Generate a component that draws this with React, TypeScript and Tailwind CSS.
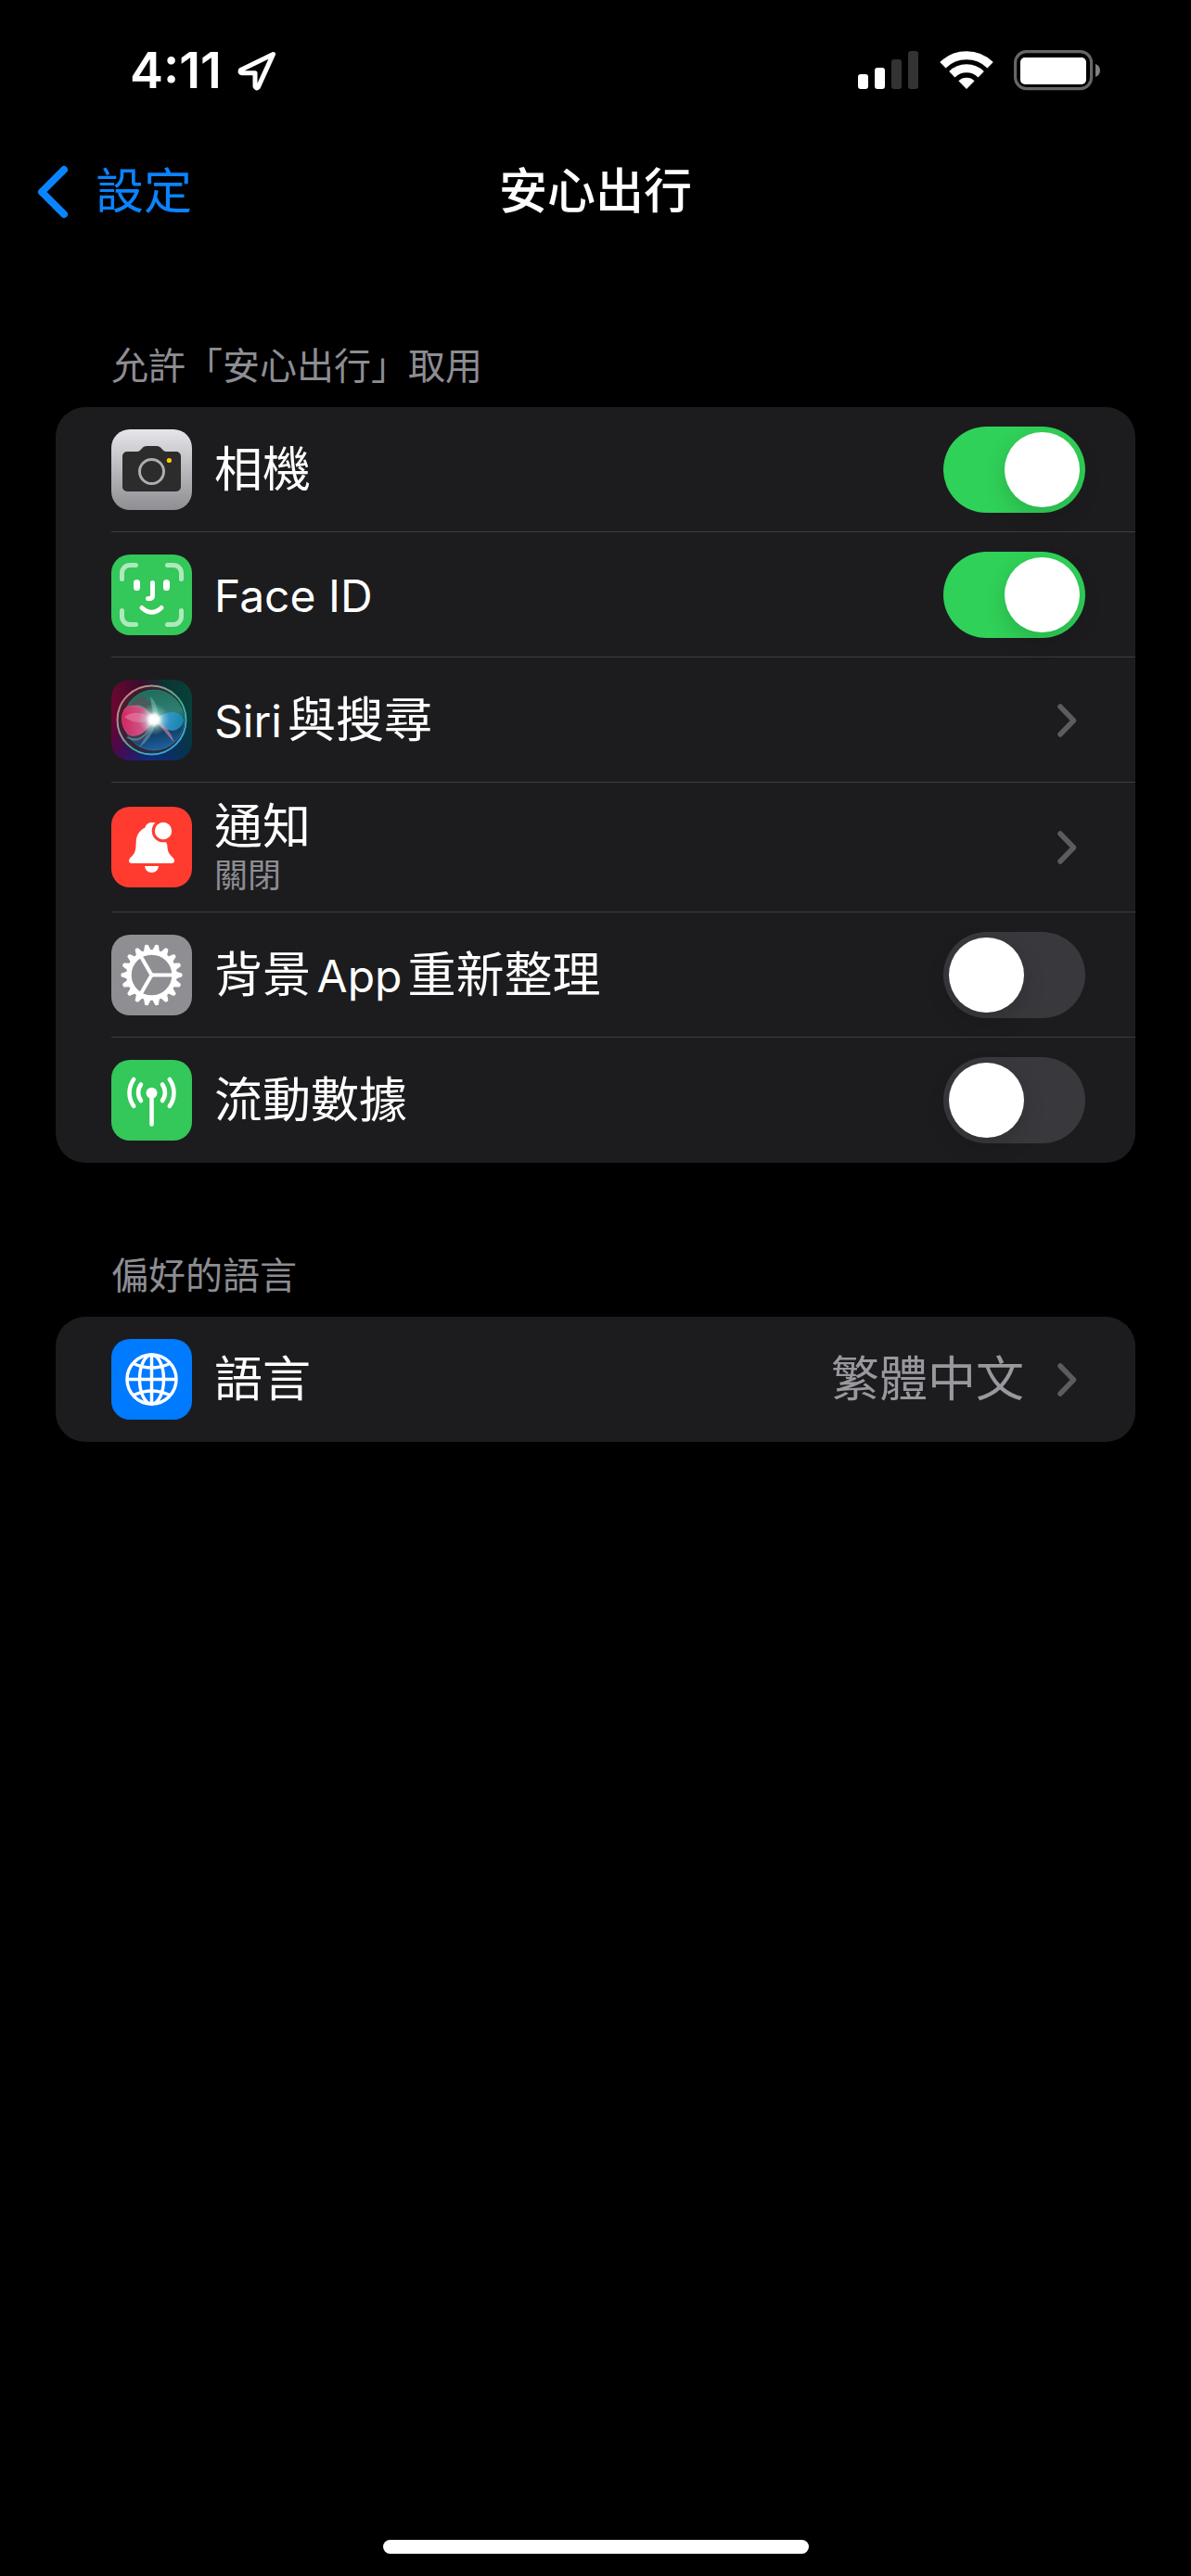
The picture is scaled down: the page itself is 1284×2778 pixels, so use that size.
import { useId, type ReactNode } from 'react'
import clsx from 'clsx'

/* ---------- status bar ---------- */

function LocationArrow() {
  return (
    <svg width="44" height="44" viewBox="0 0 44 44" fill="none" aria-hidden="true">
      <path
        d="M39.5 4.5 4.5 21.5q-1.6 2.6 1.2 3.2H20v14.6q1.4 3 3.4.6Z"
        stroke="#fff"
        strokeWidth="5"
        strokeLinejoin="round"
      />
    </svg>
  )
}

function CellularIcon() {
  return (
    <svg width="66" height="44" viewBox="0 0 66 44" aria-hidden="true">
      <rect x="0" y="26" width="11" height="16" rx="3" fill="#fff" />
      <rect x="18" y="19" width="11" height="23" rx="3" fill="#fff" />
      <rect x="36" y="10" width="11" height="32" rx="3" fill="#333" />
      <rect x="54" y="1" width="11" height="41" rx="3" fill="#333" />
    </svg>
  )
}

function WifiIcon() {
  return (
    <svg width="58" height="44" viewBox="0 0 58 44" aria-hidden="true">
      <g fill="none" stroke="#fff" strokeWidth="9">
        <path d="M3.4 16.2A36.6 36.6 0 0 1 54.6 16.2" />
        <path d="M13.3 26.2A22.4 22.4 0 0 1 44.7 26.2" />
      </g>
      <path d="M20.4 33.3a12.4 12.4 0 0 1 17.2 0L29 42Z" fill="#fff" />
    </svg>
  )
}

function BatteryIcon() {
  return (
    <svg width="95" height="44" viewBox="0 0 95 44" aria-hidden="true">
      <rect x="1.6" y="1.6" width="82" height="40" rx="12" fill="none" stroke="#666" strokeWidth="3.2" />
      <rect x="7" y="8" width="71" height="29" rx="5" fill="#fff" />
      <path d="M88 15q5 2 5 7t-5 7Z" fill="#808080" />
    </svg>
  )
}

/* ---------- row icons, all on an 87 unit tile ---------- */

function Tile({ className, children }: { className?: string; children: ReactNode }) {
  return (
    <span className={clsx('block size-[87px] shrink-0 overflow-hidden rounded-[20px]', className)}>
      <svg width="87" height="87" viewBox="0 0 87 87" fill="none" aria-hidden="true">
        {children}
      </svg>
    </span>
  )
}

function CameraIcon() {
  return (
    <Tile className="bg-linear-to-b from-[#e5e5ea] to-[#8e8e93]">
      <path
        d="M17 24h11q2 0 3.500-1.800L34 19.500Q35.500 18 38 18h11q2.500 0 4 1.500l2.500 2.700Q57 24 59 24h11a5 5 0 0 1 5 5v33a5 5 0 0 1-5 5H17a5 5 0 0 1-5-5V29a5 5 0 0 1 5-5Z"
        fill="#2c2c2c"
      />
      <circle cx="43.500" cy="45.500" r="13" stroke="#adadb2" strokeWidth="3" />
      <circle cx="62.400" cy="33.500" r="2.600" fill="#ffcc00" />
    </Tile>
  )
}

function FaceIdIcon() {
  return (
    <Tile className="bg-[#34c759]">
      <g strokeWidth="5" strokeLinecap="round">
        <path
          d="M11.500 26.500V20a8.500 8.500 0 0 1 8.500-8.500h6.500M60.500 11.500H67a8.500 8.500 0 0 1 8.500 8.500v6.500M75.500 60.500V67a8.500 8.500 0 0 1-8.500 8.500h-6.500M26.500 75.500H20a8.500 8.500 0 0 1-8.500-8.500v-6.500"
          stroke="#aee9bd"
        />
        <path d="M44.500 30.500v13.500q0 3.500-3.500 3.500h-1.500M33 57.500q10.500 9.500 21 0" stroke="#fff" />
        <path d="M27.500 30.500v5M59.500 30.500v5" stroke="#fff" strokeWidth="7" />
      </g>
    </Tile>
  )
}

function SiriIcon() {
  const id = useId()
  const ref = (name: string) => `url(#${id}${name})`

  return (
    <Tile>
      <defs>
        <linearGradient id={`${id}bg`} x1="0" y1="0" x2="1" y2="0">
          <stop offset="0" stopColor="#6c0730" />
          <stop offset="0.35" stopColor="#3a0c2c" />
          <stop offset="0.65" stopColor="#0b3433" />
          <stop offset="1" stopColor="#07403a" />
        </linearGradient>
        <linearGradient id={`${id}low`} x1="0" y1="0" x2="1" y2="0">
          <stop offset="0" stopColor="#4a0650" />
          <stop offset="0.45" stopColor="#122a80" />
          <stop offset="1" stopColor="#07304f" />
        </linearGradient>
        <linearGradient id={`${id}fade`} x1="0" y1="0" x2="0" y2="1">
          <stop offset="0.45" stopColor="#000" />
          <stop offset="1" stopColor="#fff" />
        </linearGradient>
        <mask id={`${id}mask`}>
          <rect width="87" height="87" fill={ref('fade')} />
        </mask>
        <linearGradient id={`${id}ring`} x1="0.1" y1="0.15" x2="0.85" y2="0.85">
          <stop offset="0" stopColor="#cf7f80" />
          <stop offset="0.35" stopColor="#8f9d93" />
          <stop offset="0.6" stopColor="#35b58a" />
          <stop offset="1" stopColor="#35a4e6" />
        </linearGradient>
        <linearGradient id={`${id}orb`} x1="0.3" y1="0" x2="0.5" y2="1">
          <stop offset="0" stopColor="#1f6b58" />
          <stop offset="0.45" stopColor="#2f7f74" />
          <stop offset="0.7" stopColor="#123c5c" />
          <stop offset="1" stopColor="#1d5fa3" />
        </linearGradient>
        <linearGradient id={`${id}pink`} x1="0" y1="0" x2="1" y2="0">
          <stop offset="0" stopColor="#e0225f" />
          <stop offset="0.7" stopColor="#dc5d93" />
          <stop offset="1" stopColor="#fff" />
        </linearGradient>
        <linearGradient id={`${id}blue`} x1="0" y1="0" x2="1" y2="0">
          <stop offset="0" stopColor="#fff" />
          <stop offset="0.35" stopColor="#3f9fe0" />
          <stop offset="1" stopColor="#1390b4" />
        </linearGradient>
        <radialGradient id={`${id}glow`}>
          <stop offset="0" stopColor="#fff" />
          <stop offset="0.3" stopColor="#fff" stopOpacity="0.95" />
          <stop offset="0.55" stopColor="#c9f3ea" stopOpacity="0.4" />
          <stop offset="1" stopColor="#9fe0d5" stopOpacity="0" />
        </radialGradient>
      </defs>
      <rect width="87" height="87" fill={ref('bg')} />
      <rect width="87" height="87" fill={ref('low')} mask={ref('mask')} />
      <circle cx="43.500" cy="43.500" r="37" fill="#3c2a35" fillOpacity="0.6" stroke={ref('ring')} strokeWidth="2" />
      <circle cx="46" cy="43.500" r="32.500" fill={ref('orb')} stroke="#2fa07c" strokeOpacity="0.5" />
      <path d="M13 45q2-22 21-27 10 5 12 25Q40 64 28 68 14 62 13 45Z" fill="#7a3a4c" fillOpacity="0.45" />
      <path d="M45 42Q32 20 16 34M45 44Q34 72 17 62" stroke="#5ccfc6" strokeOpacity="0.5" strokeWidth="2" />
      <path
        d="M47 43C39 31 24 24 15 31c-6 8-4 24 6 29 11 2 20-8 26-17Z"
        fill={ref('pink')}
        fillOpacity="0.9"
        stroke="#f05a90"
        strokeOpacity="0.7"
      />
      <path d="M14 40q14-10 32 3Q26 50 14 40Z" fill="#f0a0bd" fillOpacity="0.4" />
      <path d="M46 43q12-9 22-8 9 2 10 9-1 9-12 11-10 0-20-12Z" fill={ref('blue')} fillOpacity="0.85" />
      <path d="M46 42 42 18q10 10 8 24ZM46 46 30 73q14-10 18-26Z" fill="#cfeaf0" fillOpacity="0.3" />
      <path d="M48 45l20 23q-4-14-18-24Z" fill="#e08aa8" fillOpacity="0.6" />
      <circle cx="46" cy="43" r="17" fill={ref('glow')} />
    </Tile>
  )
}

function BellIcon() {
  return (
    <Tile className="bg-[#ff3b30]">
      <path
        d="M43.500 17c-4 0-6.500 2.500-7 5.500-6.500 3-9.500 8.500-9.800 15.500-.3 9-.9 11.500-4.200 15-2.300 2.400-3.500 3.500-3.500 5.200 0 1.700 1.200 2.800 3 2.800h43c1.800 0 3-1.100 3-2.800 0-1.700-1.200-2.800-3.500-5.200-3-3.200-4-6-4.200-12L50 17Z"
        fill="#fff"
      />
      <circle cx="56" cy="26" r="12.300" fill="#ff3b30" />
      <circle cx="56" cy="26" r="9.200" fill="#fff" />
      <path d="M36 64h15q-1 7-7.500 7T36 64Z" fill="#fff" />
    </Tile>
  )
}

const gearTeeth = Array.from({ length: 18 }, (_, i) => i * 20)
const gearSpokes = [0, 120, 240]

function GearIcon() {
  return (
    <Tile className="bg-[#8e8e93]">
      <circle cx="43.500" cy="43.500" r="24.500" stroke="#fff" strokeWidth="5.500" />
      {gearTeeth.map((angle) => (
        <path
          key={angle}
          d="M69 39.300 76.200 41.700q.8 1.800 0 3.600L69 47.700Z"
          fill="#fff"
          transform={`rotate(${angle} 43.500 43.500)`}
        />
      ))}
      {gearSpokes.map((angle) => (
        <path
          key={angle}
          d="M43.500 43.500H67"
          stroke="#fff"
          strokeWidth="4"
          transform={`rotate(${angle} 43.500 43.500)`}
        />
      ))}
    </Tile>
  )
}

function AntennaIcon() {
  return (
    <Tile className="bg-[#34c759]">
      <g stroke="#fff" strokeWidth="4.600" strokeLinecap="round">
        <path d="M43.500 36v33.500" />
        <path d="M32 26.500a14.500 14.500 0 0 0 0 17.500M55 26.500a14.500 14.500 0 0 1 0 17.500" />
        <path d="M24.200 21a24.500 24.500 0 0 0 0 28.800M62.800 21a24.500 24.500 0 0 1 0 28.800" />
      </g>
      <circle cx="43.500" cy="35.700" r="6" fill="#fff" />
    </Tile>
  )
}

function GlobeIcon() {
  return (
    <Tile className="bg-[#007aff]">
      <g stroke="#fff" strokeWidth="3.500">
        <circle cx="43.500" cy="43.500" r="26.500" />
        <ellipse cx="43.500" cy="43.500" rx="13" ry="26.500" />
        <path d="M43.500 17v53M17 43.500h53" />
        <path d="M24 26.500q19.500 9 39 0M24 60.500q19.500-9 39 0" />
      </g>
    </Tile>
  )
}

/* ---------- list ---------- */

// Latin runs are set a step smaller so they sit evenly beside the Chinese
function Latin({ children }: { children: ReactNode }) {
  return <span className="text-5xl leading-none">{children}</span>
}

function Chevron() {
  return (
    <svg width="21" height="36" viewBox="0 0 21 36" fill="none" className="mr-[9px] shrink-0" aria-hidden="true">
      <path d="M3 3l14.500 15L3 33" stroke="#5b5b60" strokeWidth="5.500" strokeLinecap="round" strokeLinejoin="round" />
    </svg>
  )
}

const rowClass =
  'flex w-full items-center gap-6 pr-[54px] text-left text-[52px] leading-[56px] text-white'

interface RowProps {
  icon: ReactNode
  label: ReactNode
  last?: boolean
}

function SwitchRow({ icon, label, last, on }: RowProps & { on?: boolean }) {
  return (
    <li className="pl-15">
      <label className={clsx(rowClass, 'min-h-[135px]', !last && 'border-b border-[#3d3d41] pt-px')}>
        {icon}
        <span className="flex-1 [text-autospace:normal]">{label}</span>
        <input
          type="checkbox"
          role="switch"
          defaultChecked={on}
          className="flex h-[93px] w-[153px] shrink-0 appearance-none items-center rounded-full bg-[#39393d] px-1.5 before:size-[81px] before:rounded-full before:bg-white before:shadow-[0_9px_24px_rgba(0,0,0,0.15)] checked:bg-[#30d158] checked:before:translate-x-[60px]"
        />
      </label>
    </li>
  )
}

function LinkRow({ icon, label, last, detail, value }: RowProps & { detail?: string; value?: string }) {
  return (
    <li className="pl-15">
      <button
        type="button"
        className={clsx(
          rowClass,
          detail ? 'min-h-[140px]' : 'min-h-[135px]',
          !last && 'border-b border-[#3d3d41]',
          !last && !detail && 'pt-px',
        )}
      >
        {icon}
        <span className={clsx('flex-1 [text-autospace:normal]', detail && 'pt-1')}>
          {label}
          {detail && <span className="block text-4xl leading-12 text-[#8d8d93]">{detail}</span>}
        </span>
        {value && <span className="mr-3 text-[#98989f]">{value}</span>}
        <Chevron />
      </button>
    </li>
  )
}

function Section({ title, children }: { title: string; children: ReactNode }) {
  return (
    <section>
      <h2 className="mb-3.5 px-15 text-[40px] leading-[60px] text-[#8d8d93]">{title}</h2>
      <ul className="overflow-hidden rounded-[32px] bg-[#1c1c1e]">{children}</ul>
    </section>
  )
}

export default function App() {
  return (
    <div
      lang="zh-Hant"
      className="flex min-h-screen flex-col bg-black font-[Inter,'Noto_Sans_CJK_TC',sans-serif] text-white"
    >
      <header>
        <div className="flex h-[152px] items-center justify-between pr-24 pl-[140px]">
          <div className="flex items-center gap-4">
            <span className="text-[54px] leading-none font-semibold">4:11</span>
            <LocationArrow />
          </div>
          <div className="flex items-center gap-[22px]">
            <CellularIcon />
            <WifiIcon />
            <BatteryIcon />
          </div>
        </div>
        <nav className="grid h-[110px] grid-cols-[1fr_auto_1fr] items-center px-[38px]">
          <a href="#settings" className="flex items-center gap-7 text-[52px] leading-[60px] text-[#0a84ff]">
            <svg width="37" height="60" viewBox="0 0 37 60" fill="none" aria-hidden="true">
              <path d="M31 6 7 30l24 24" stroke="currentColor" strokeWidth="8" strokeLinecap="round" strokeLinejoin="round" />
            </svg>
            設定
          </a>
          <h1 className="text-[52px] leading-[60px] font-medium">安心出行</h1>
        </nav>
      </header>

      <main className="flex flex-1 flex-col gap-[92px] px-15 pt-[103px]">
        <Section title="允許「安心出行」取用">
          <SwitchRow icon={<CameraIcon />} label="相機" on />
          <SwitchRow icon={<FaceIdIcon />} label={<Latin>Face ID</Latin>} on />
          <LinkRow icon={<SiriIcon />} label={<><Latin>Siri</Latin>與搜尋</>} />
          <LinkRow icon={<BellIcon />} label="通知" detail="關閉" />
          <SwitchRow icon={<GearIcon />} label={<>背景<Latin>App</Latin>重新整理</>} />
          <SwitchRow icon={<AntennaIcon />} label="流動數據" last />
        </Section>
        <Section title="偏好的語言">
          <LinkRow icon={<GlobeIcon />} label="語言" value="繁體中文" last />
        </Section>
      </main>

      <footer className="flex justify-center pb-6">
        <div className="h-[15px] w-[459px] rounded-full bg-white" />
      </footer>
    </div>
  )
}
